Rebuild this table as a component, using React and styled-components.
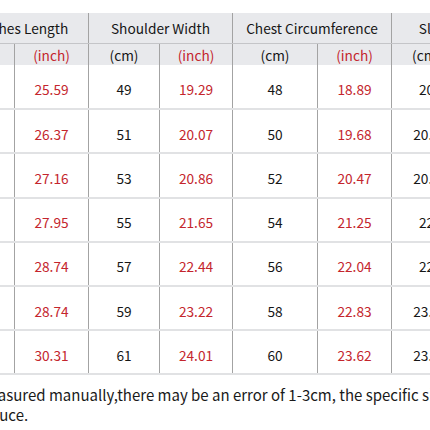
import React from 'react';
import styled, { createGlobalStyle } from 'styled-components';

const GlobalStyle = createGlobalStyle`
  html, body {
    margin: 0;
    padding: 0;
    background: #ffffff;
  }
  body {
    font-family: "Noto Sans CJK SC", "Noto Sans", sans-serif;
    color: #222222;
  }
`;

const Frame = styled.div`
  width: 430px;
  height: 430px;
  overflow: hidden;
  padding-top: 13px;
  box-sizing: border-box;
`;

const Table = styled.table`
  border-collapse: collapse;
  table-layout: fixed;
  width: 643px;
  margin-left: -108px;
`;

const HeadCell = styled.th`
  height: 30px;
  padding: 0;
  background: #e8e9ec;
  font-weight: 400;
  font-size: 13.7px;
  color: #161616;
  text-align: center;
  white-space: nowrap;
  border-left: 1px solid #a3a3a3;
  border-right: 1px solid #a3a3a3;
  border-bottom: 1px solid #c4c5c8;
`;

const UnitCell = styled.th`
  height: 21px;
  padding: 0;
  background: #e8e9ec;
  font-weight: 400;
  font-size: 13.7px;
  text-align: center;
  color: ${p => (p.$inch ? '#c4252d' : '#161616')};
  border-left: 1px solid #a3a3a3;
  border-right: 1px solid #a3a3a3;
`;

const Cell = styled.td`
  box-sizing: border-box;
  height: 44.2px;
  padding: 5px 0 0;
  text-align: center;
  font-size: 13.7px;
  color: ${p => (p.$inch ? '#c4252d' : '#161616')};
  border-left: 1px solid #a3a3a3;
  border-right: 1px solid #a3a3a3;
  border-bottom: 2px solid #e1e2e4;
  white-space: nowrap;
`;

const Note = styled.p`
  margin: 10px 0 0 -144px;
  font-size: 15px;
  line-height: 20px;
  color: #1a1a1a;
  white-space: nowrap;
`;

const groups = ['Size', 'Clothes Length', 'Shoulder Width', 'Chest Circumference', 'Sleeve Length'];
const widths = [60, 62, 74, 71, 73, 85, 74, 70, 74];

const rows = [
  ['S', 65, '25.59', 49, '19.29', 48, '18.89', '20', '7.87'],
  ['M', 67, '26.37', 51, '20.07', 50, '19.68', '20.5', '8.07'],
  ['L', 69, '27.16', 53, '20.86', 52, '20.47', '20.5', '8.07'],
  ['XL', 71, '27.95', 55, '21.65', 54, '21.25', '22', '8.66'],
  ['2XL', 73, '28.74', 57, '22.44', 56, '22.04', '22', '8.66'],
  ['3XL', 73, '28.74', 59, '23.22', 58, '22.83', '23.5', '9.25'],
  ['4XL', 77, '30.31', 61, '24.01', 60, '23.62', '23.5', '9.25'],
];

export default function App() {
  return (
    <Frame>
      <GlobalStyle />
      <Table>
        <colgroup>
          {widths.map((w, i) => <col key={i} style={{ width: w }} />)}
        </colgroup>
        <thead>
          <tr>
            <HeadCell rowSpan={2}>{groups[0]}</HeadCell>
            {groups.slice(1).map(g => <HeadCell key={g} colSpan={2}>{g}</HeadCell>)}
          </tr>
          <tr>
            {groups.slice(1).map(g => (
              <React.Fragment key={g}>
                <UnitCell>(cm)</UnitCell>
                <UnitCell $inch>(inch)</UnitCell>
              </React.Fragment>
            ))}
          </tr>
        </thead>
        <tbody>
          {rows.map(r => (
            <tr key={r[0]}>
              {r.map((v, i) => (
                <Cell key={i} $inch={i > 0 && i % 2 === 0}>{v}</Cell>
              ))}
            </tr>
          ))}
        </tbody>
      </Table>
      <Note>
        Note: The data is measured manually,there may be an error of 1-3cm, the specific size is subject
        <br />
        as to the actual produce.
      </Note>
    </Frame>
  );
}
